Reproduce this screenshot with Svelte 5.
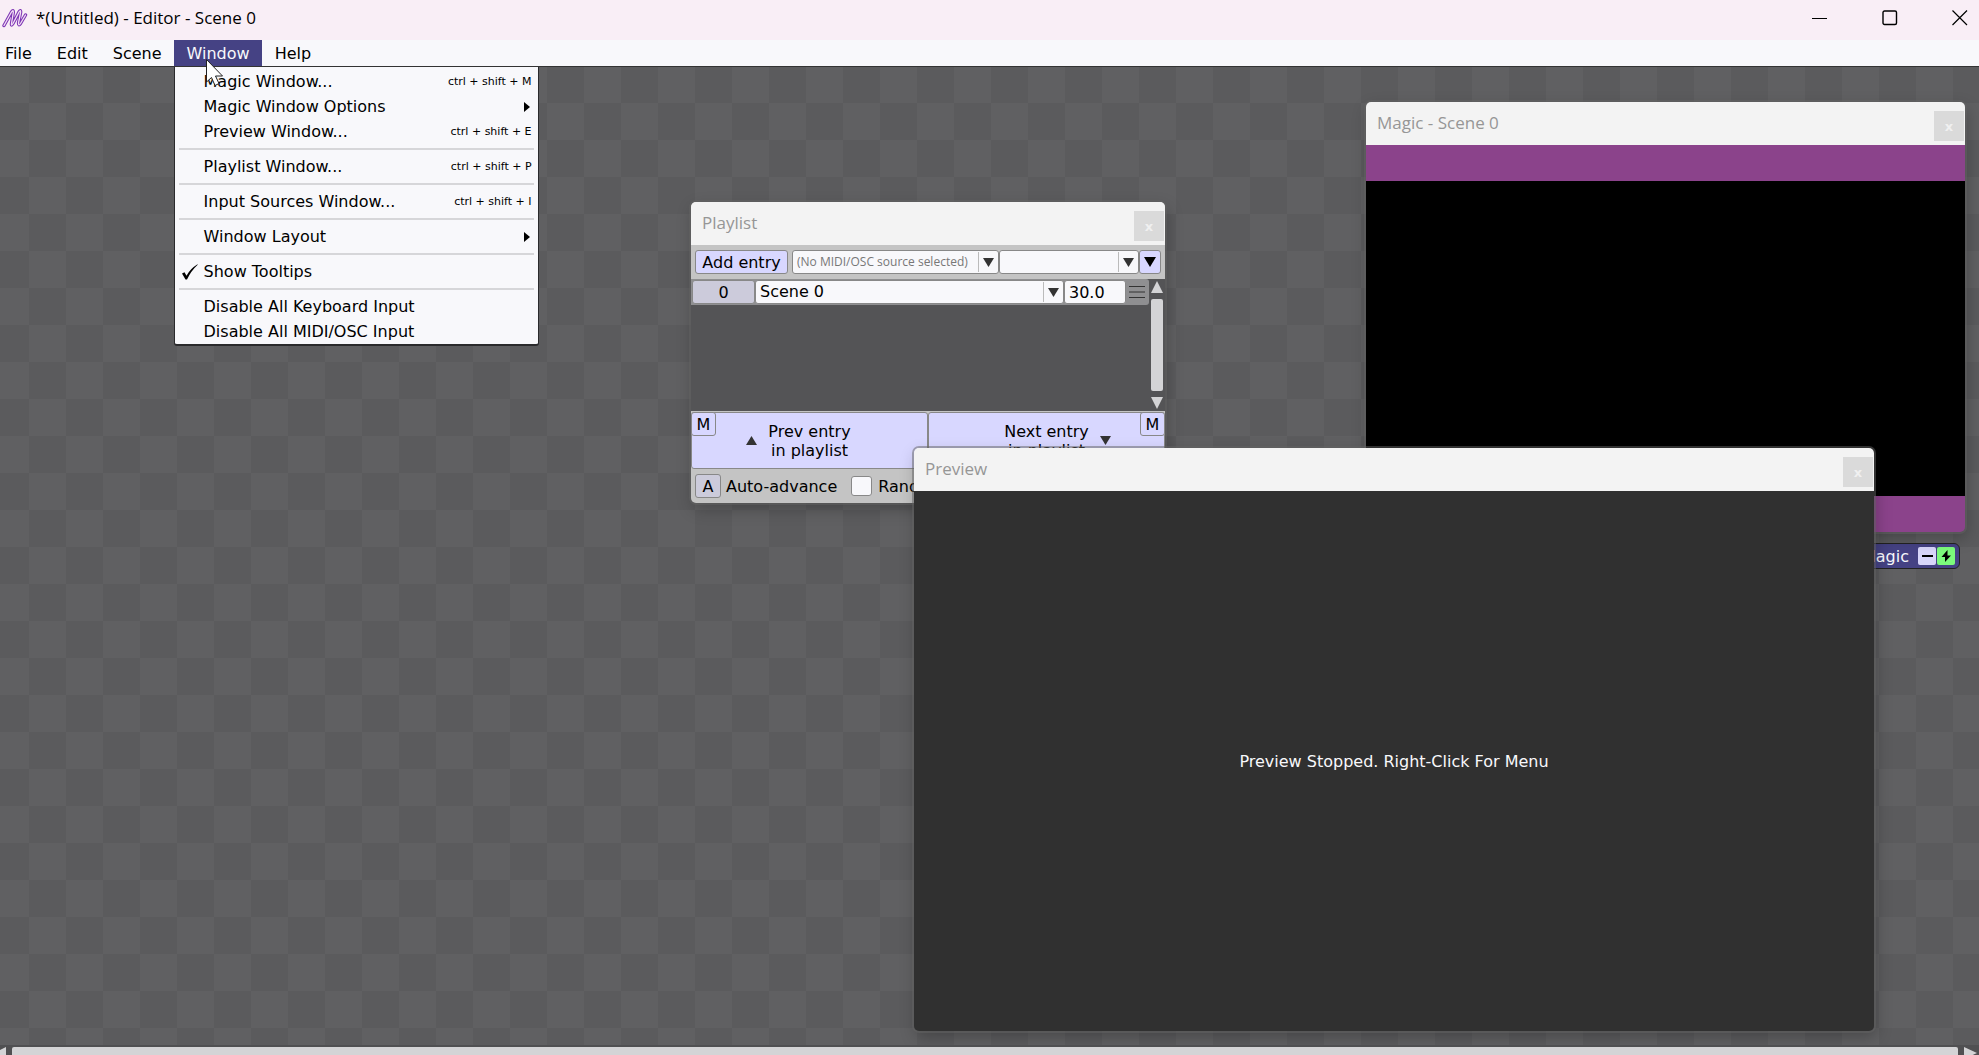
<script>
  let menus = ["File", "Edit", "Scene", "Window", "Help"];
  let open = "Window";
  let scene = "Scene 0";
  let duration = "30.0";
  let random = false;

  const groups = [
    [
      { label: "Magic Window...", key: "ctrl + shift + M" },
      { label: "Magic Window Options", sub: true },
      { label: "Preview Window...", key: "ctrl + shift + E" },
    ],
    [{ label: "Playlist Window...", key: "ctrl + shift + P" }],
    [{ label: "Input Sources Window...", key: "ctrl + shift + I" }],
    [{ label: "Window Layout", sub: true }],
    [{ label: "Show Tooltips", checked: true }],
    [{ label: "Disable All Keyboard Input" }, { label: "Disable All MIDI/OSC Input" }],
  ];
</script>

<div class="app">
  <header class="titlebar">
    <svg class="logo" width="26" height="20" viewBox="0 0 26 20">
      <path d="M2 17.500L9.500 4Q11.500 1 11.300 4.500L9.500 15.500Q9.200 18.500 11 15.500L17 4Q19 1 18.600 4.500L16.500 15Q16.500 18.500 18.500 15.500L23.500 7" fill="none" stroke="#7d35b4" stroke-width="3.400" stroke-linecap="round" stroke-linejoin="round" />
      <path d="M2 17.500L9.500 4Q11.500 1 11.300 4.500L9.500 15.500Q9.200 18.500 11 15.500L17 4Q19 1 18.600 4.500L16.500 15Q16.500 18.500 18.500 15.500L23.500 7" fill="none" stroke="#f3dff5" stroke-width="1.300" stroke-linecap="round" stroke-linejoin="round" />
    </svg>
    <h1>*(Untitled) - Editor - Scene 0</h1>
    <div class="controls">
      <button aria-label="Minimize">
        <svg width="16" height="16"><path d="M0 8.500H15" stroke="#000" /></svg>
      </button>
      <button aria-label="Maximize">
        <svg width="16" height="16"><rect x="1" y="1" width="13.500" height="13.500" rx="1.500" fill="none" stroke="#000" stroke-width="1.400" /></svg>
      </button>
      <button aria-label="Close">
        <svg width="16" height="16"><path d="M.5 .5l14.500 14.500M15 .5L.5 15" stroke="#000" stroke-width="1.200" /></svg>
      </button>
    </div>
  </header>

  <nav class="menubar">
    {#each menus as name}
      <div class="menu-holder">
        <button class="menu-name" class:open={open === name}>{name}</button>
        {#if open === name}
          <div class="menu">
            {#each groups as group, i}
              {#if i > 0}
                <hr />
              {/if}
              {#each group as item}
                <button class="item">
                  <span class="mark">
                    {#if item.checked}
                      <svg width="17" height="16" viewBox="0 0 17 16"><path d="M1 9.500l2.500-1.300 2 3.500Q9 5 16.500 .3L16.700 .8Q10 7 6 15.500H4.500z" /></svg>
                    {/if}
                  </span>
                  <span class="label">{item.label}</span>
                  {#if item.key}
                    <kbd>{item.key}</kbd>
                  {/if}
                  {#if item.sub}
                    <svg class="sub" width="6" height="10"><path d="M0 0l6 5-6 5z" /></svg>
                  {/if}
                </button>
              {/each}
            {/each}
          </div>
          <svg class="cursor" width="20" height="29" viewBox="0 0 20 29">
            <path d="M1.500 1.500V24L6.500 19.500 10 27.500 14 25.500 10.500 18H17.500z" fill="#fff" stroke="#222" />
          </svg>
        {/if}
      </div>
    {/each}
  </nav>

  <main class="canvas">
    <div class="node">
      <span>Magic</span>
      <button aria-label="Collapse">
        <svg width="16" height="16"><path d="M3 8h11" stroke="#000" stroke-width="2" /></svg>
      </button>
      <button class="on" aria-label="Active">
        <svg width="16" height="16"><path d="M9.500 2L3.500 9H7V14L13 7.500H9.500z" /></svg>
      </button>
    </div>

    <section class="win magic">
      <header>
        <h2>Magic - Scene 0</h2>
        <button class="close" aria-label="Close">x</button>
      </header>
      <div class="output"><div></div></div>
    </section>

    <section class="win playlist">
      <header>
        <h2>Playlist</h2>
        <button class="close" aria-label="Close">x</button>
      </header>

      <div class="toolbar">
        <button class="add">Add entry</button>
        <div class="select source">
          <select aria-label="MIDI/OSC source">
            <option>(No MIDI/OSC source selected)</option>
          </select>
          <svg width="11" height="9"><path d="M0 0h11L5.500 9z" /></svg>
        </div>
        <div class="select channel">
          <select aria-label="Message"><option></option></select>
          <svg width="11" height="9"><path d="M0 0h11L5.500 9z" /></svg>
        </div>
        <button class="more" aria-label="More">
          <svg width="12" height="10"><path d="M0 0h12L6 10z" /></svg>
        </button>
      </div>

      <div class="list">
        <div class="rows">
          <div class="row">
            <button class="index">0</button>
            <div class="select scene">
              <select aria-label="Scene" bind:value={scene}>
                <option>Scene 0</option>
              </select>
              <svg width="11" height="9"><path d="M0 0h11L5.500 9z" /></svg>
            </div>
            <input class="time" aria-label="Duration" bind:value={duration} />
            <div class="grip">
              <svg width="16" height="12"><path d="M0 .5h16M0 6h16M0 11.500h16" stroke="#333" /></svg>
            </div>
          </div>
        </div>
        <div class="scroll">
          <svg width="12" height="12"><path d="M6 0l6 12H0z" /></svg>
          <div class="thumb"></div>
          <svg width="12" height="12"><path d="M0 0h12L6 12z" /></svg>
        </div>
      </div>

      <div class="steps">
        <div class="step">
          <button class="go">
            <svg width="11" height="9"><path d="M5.500 0L11 9H0z" /></svg>
            <span>Prev entry<br />in playlist</span>
          </button>
          <button class="map left">M</button>
        </div>
        <div class="step">
          <button class="go">
            <i></i>
            <span>Next entry<br />in playlist</span>
            <svg width="11" height="9"><path d="M0 0h11L5.500 9z" /></svg>
          </button>
          <button class="map right">M</button>
        </div>
      </div>

      <footer>
        <button class="auto" id="auto">A</button>
        <label for="auto">Auto-advance</label>
        <input type="checkbox" id="random" bind:checked={random} />
        <label for="random">Random</label>
      </footer>
    </section>

    <section class="win preview">
      <header>
        <h2>Preview</h2>
        <button class="close" aria-label="Close">x</button>
      </header>
      <p>Preview Stopped. Right-Click For Menu</p>
    </section>
  </main>

  <div class="hscroll">
    <svg width="6" height="12"><path d="M0 3L6 0V12H0z" /></svg>
    <div class="hthumb"></div>
    <svg width="13" height="12"><path d="M0 0L13 6 0 12z" /></svg>
  </div>
</div>

<style>
  :global(body) {
    overflow: hidden;
  }

  .app {
    display: flex;
    flex-direction: column;
    height: 100vh;
    overflow: hidden;
    font: 16px "DejaVu Sans", Verdana, sans-serif;
    color: #000;
  }

  .app * {
    box-sizing: border-box;
  }

  button,
  input,
  select {
    font: inherit;
    color: inherit;
    margin: 0;
    padding: 0;
    border: 0;
    border-radius: 0;
    background: none;
  }

  svg {
    display: block;
    flex: none;
  }

  h1,
  h2,
  p {
    margin: 0;
    font-weight: normal;
  }

  /* title bar */
  .titlebar {
    display: flex;
    align-items: center;
    flex: none;
    height: 40px;
    padding: 0 11px 5px 2px;
    background: #f9eef6;
  }

  h1 {
    flex: 1;
    margin-left: 8px;
    font: 17px "Open Sans", "Segoe UI", sans-serif;
  }

  .controls {
    display: flex;
    gap: 54px;
  }

  /* menu bar */
  .menubar {
    display: flex;
    flex: none;
    height: 27px;
    background: #f8f8fb;
    border-bottom: 1px solid #333;
  }

  .menu-holder {
    position: relative;
  }

  .menu-name {
    height: 26px;
    padding: 1px 12px 0 13px;
    line-height: 25px;
  }

  .menu-holder:first-child .menu-name {
    padding-left: 5px;
  }

  .menu-name.open {
    background: #454284;
    color: #f8f8fb;
  }

  .menu {
    position: absolute;
    z-index: 10;
    top: 27px;
    left: 0;
    width: 365px;
    padding: 2px 0 0;
    background: #f8f8fb;
    border: solid #2a2a2c;
    border-width: 0 1px 2px;
    border-radius: 0 0 3px 3px;
  }

  .menu hr {
    height: 2px;
    margin: 4px;
    border: 0;
    background: #d6d6d9;
  }

  .item {
    display: flex;
    align-items: center;
    width: 100%;
    height: 25px;
    padding: 0 6px;
    text-align: left;
  }

  .mark {
    width: 23px;
  }

  .label {
    flex: 1;
  }

  kbd {
    font: 11px "DejaVu Sans", Verdana, sans-serif;
  }

  .sub {
    margin-right: 2px;
  }

  .cursor {
    position: absolute;
    z-index: 11;
    top: 18px;
    left: 31px;
  }

  /* workspace */
  .canvas {
    position: relative;
    flex: 1;
    overflow: hidden;
    background: conic-gradient(#5b5b5d 25%, #606062 0 50%, #5b5b5d 0 75%, #606062 0) -8px -1px / 74px 74px;
  }

  .win {
    position: absolute;
    display: flex;
    flex-direction: column;
    border-radius: 5px;
    box-shadow: 0 0 0 2px rgba(100, 100, 100, 0.5), 2px 6px 16px rgba(0, 0, 0, 0.25);
  }

  .win > header {
    display: flex;
    justify-content: space-between;
    flex: none;
    height: 43px;
    padding: 9px 1px 0 11px;
    background: #f3f3f3;
    border-radius: 5px 5px 0 0;
  }

  h2 {
    font: 17px/24px "Open Sans", "Segoe UI", sans-serif;
    color: #969696;
  }

  .close {
    width: 30px;
    height: 30px;
    font: bold 13px "DejaVu Sans", sans-serif;
    color: #f0f0f0;
    background: #dadada;
  }

  .magic {
    top: 35px;
    left: 1366px;
    width: 599px;
    height: 430px;
  }

  .output {
    display: flex;
    flex: 1;
    padding: 36px 0;
    background: #8b438b;
    border-radius: 0 0 5px 5px;
  }

  .output div {
    flex: 1;
    background: #000;
  }

  .node {
    position: absolute;
    top: 476px;
    left: 1820px;
    display: flex;
    align-items: center;
    justify-content: flex-end;
    gap: 1px;
    width: 140px;
    height: 26px;
    padding-right: 4px;
    color: #f8f8fb;
    background: #454284;
    border: 1px solid #222;
    border-radius: 6px;
  }

  .node span {
    margin-right: 8px;
  }

  .node button {
    width: 18px;
    height: 18px;
    padding: 1px;
    background: #d8d6fa;
    border-radius: 2px;
  }

  .node .on {
    background: #7cfa7c;
  }

  .preview {
    top: 381px;
    left: 914px;
    width: 960px;
    height: 583px;
  }

  .preview p {
    display: flex;
    align-items: center;
    justify-content: center;
    flex: 1;
    color: #f8f8fb;
    background: #303030;
    border-radius: 0 0 5px 5px;
  }

  /* playlist */
  .playlist {
    top: 135px;
    left: 691px;
    width: 474px;
    background: #c4c4c4;
  }

  .toolbar {
    display: flex;
    height: 34px;
    padding: 5px 4px;
  }

  .add,
  .more {
    height: 24px;
    background: #d8d7ff;
    border: 1px solid #888;
    border-radius: 3px;
  }

  .add {
    width: 93px;
    margin-right: 4px;
  }

  .more {
    display: grid;
    place-items: center;
    width: 22px;
  }

  .select {
    display: flex;
    align-items: center;
    height: 24px;
    padding: 1px 4px 1px 0;
    background: #f8f8fb;
    border: 1px solid #888;
    border-radius: 3px;
  }

  .select select {
    flex: 1;
    min-width: 0;
    height: 20px;
    padding: 0 4px;
    border-right: 1px solid #bbb;
    appearance: none;
    line-height: 20px;
  }

  .select svg {
    margin-left: 4px;
    fill: #333;
  }

  .source {
    width: 207px;
  }

  .source select {
    font: 12px/20px "Open Sans", "Segoe UI", sans-serif;
    color: #777;
  }

  .channel {
    flex: 1;
  }

  .list {
    display: flex;
    height: 132px;
    background: #545456;
  }

  .rows {
    flex: 1;
  }

  .row {
    display: flex;
    align-items: center;
    height: 26px;
    padding-left: 1px;
    background: #8f8f91;
    border-radius: 0 3px 3px 0;
  }

  .index {
    width: 63px;
    height: 24px;
    background: #cccbdb;
    border: 1px solid #888;
    border-radius: 3px;
  }

  .scene {
    flex: 1;
  }

  .time {
    width: 62px;
    height: 24px;
    padding: 0 4px;
    background: #f8f8fb;
    border: 1px solid #888;
    border-radius: 3px;
  }

  .grip {
    padding: 0 4px 0 3px;
  }

  .scroll {
    display: flex;
    flex-direction: column;
    gap: 6px;
    width: 16px;
    padding: 2px;
    fill: #d4d4d6;
  }

  .thumb {
    flex: 1;
    background: #d4d4d6;
    border-radius: 2px;
  }

  .steps {
    display: flex;
    padding-top: 1px;
  }

  .step {
    position: relative;
    flex: 1;
  }

  .go {
    display: grid;
    grid-template-columns: 1fr auto 1fr;
    align-items: center;
    gap: 11px;
    width: 100%;
    height: 57px;
    line-height: 19px;
    background: #d8d7ff;
    border: 1px solid #888;
    border-radius: 3px;
  }

  .go svg {
    fill: #333;
  }

  .go svg:first-child {
    justify-self: end;
  }

  .map {
    position: absolute;
    top: 0;
    width: 25px;
    height: 24px;
    background: #d8d7ff;
    border: 1px solid #888;
    border-radius: 3px;
  }

  .left {
    left: 0;
  }

  .right {
    right: 0;
  }

  footer {
    display: flex;
    align-items: center;
    height: 34px;
    padding: 0 4px;
  }

  .auto {
    width: 26px;
    height: 24px;
    margin-right: 5px;
    background: #cccbdb;
    border: 1px solid #888;
    border-radius: 3px;
  }

  footer input {
    width: 21px;
    height: 20px;
    margin: 0 6px 0 14px;
    appearance: none;
    background: #f8f8fb;
    border: 1px solid #888;
    border-radius: 3px;
  }

  /* horizontal scroll bar runs past the lower edge */
  .hscroll {
    display: flex;
    flex: none;
    height: 10px;
    padding: 2px 2px 0 0;
    gap: 6px;
    overflow: hidden;
    background: #505052;
    fill: #d4d4d6;
  }

  .hthumb {
    flex: 1;
    height: 12px;
    background: #d4d4d6;
    border-radius: 2px;
  }
</style>
